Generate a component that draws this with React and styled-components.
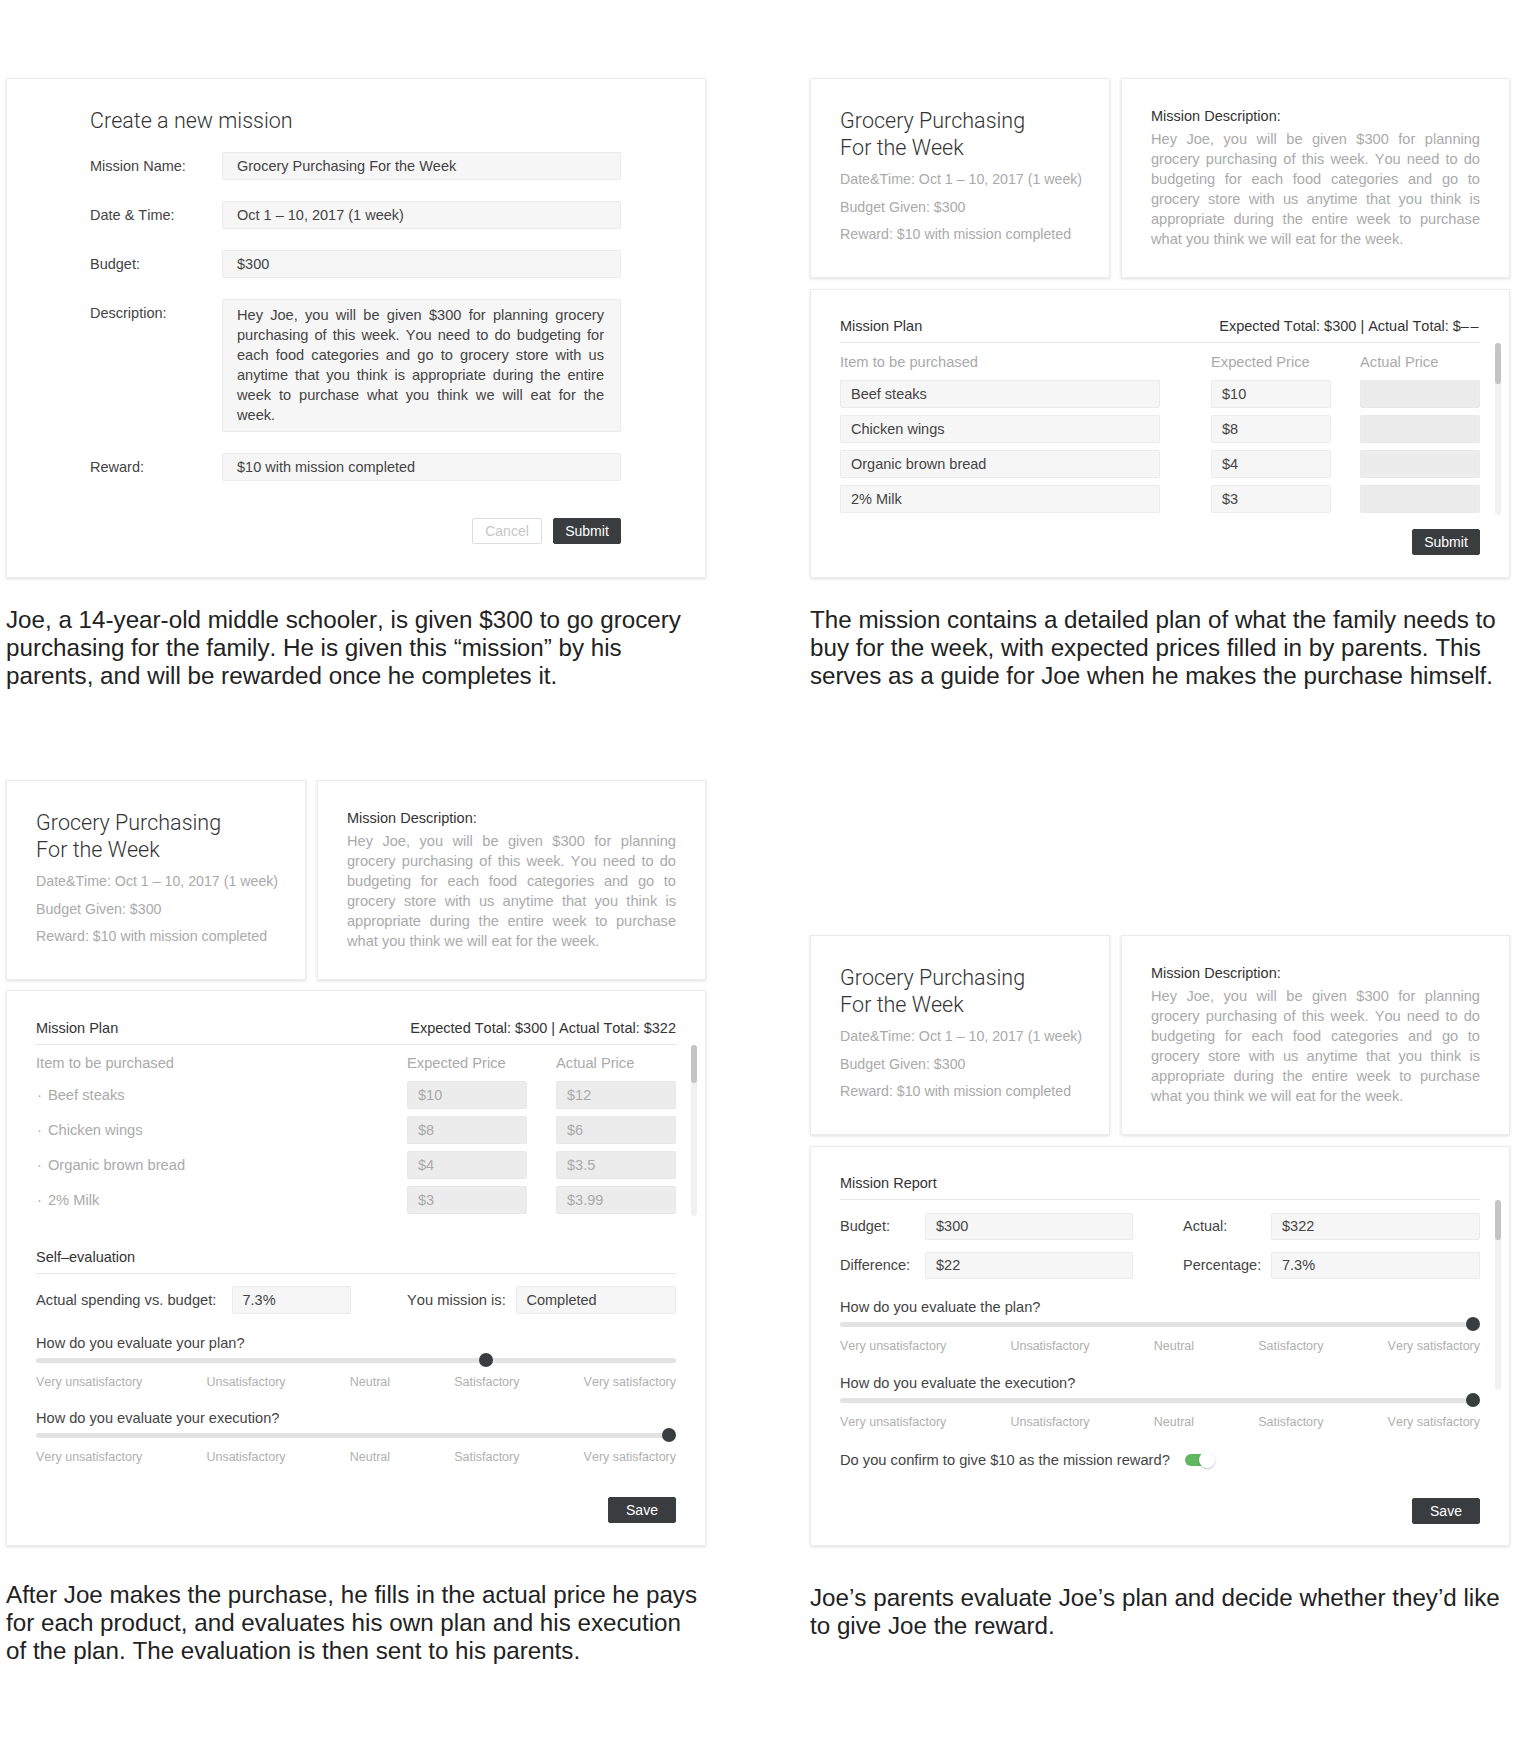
import React from 'react'
import styled, { createGlobalStyle } from 'styled-components'

const GlobalStyle = createGlobalStyle`
  *, *::before, *::after { box-sizing: border-box; }
  body {
    margin: 0;
    background: #fff;
    font-family: "Liberation Sans", Arial, sans-serif;
    color: #333;
    font-kerning: none;
  }
`

const Page = styled.div`
  display: grid;
  grid-template-columns: 700px 700px;
  column-gap: 104px;
  padding: 78px 0 76px 6px;
`

const Scene = styled.div`
  display: flex;
  flex-direction: column;
  gap: ${({ $gap }) => $gap ?? 11}px;
  align-self: end;
`

const CardRow = styled.div`
  display: flex;
  gap: ${({ $gap }) => $gap ?? 10}px;
`

const Card = styled.div`
  flex: ${({ $w, $grow }) => ($w ? `0 0 ${$w}px` : $grow ? '1' : 'none')};
  height: ${({ $h }) => $h}px;
  padding: ${({ $pad }) => $pad || '26px 29px 0'};
  background: #fff;
  border: 1px solid #ececec;
  box-shadow: 0 1px 3px rgba(0, 0, 0, 0.13);
`

const Caption = styled.p`
  width: 700px;
  margin: ${({ $top }) => $top}px 0 ${({ $bottom }) => $bottom || 0}px;
  font-size: 24.2px;
  line-height: 28px;
  color: #222;
`

const Title = styled.h1`
  margin: 0;
  font-family: Roboto, "Liberation Sans", sans-serif;
  font-weight: 300;
  font-size: 21.5px;
  line-height: ${({ $lh }) => $lh || 26}px;
  color: #333;
`

/* form */
const FormGrid = styled.div`
  display: grid;
  grid-template-columns: 132px 1fr;
  row-gap: 21px;
  margin-top: 18px;
`

const FormLabel = styled.div`
  font-size: 14.5px;
  line-height: 28px;
  color: #444;
`

const Field = styled.div`
  width: ${({ $w }) => ($w ? `${$w}px` : 'auto')};
  height: ${({ $h }) => $h || 28}px;
  padding: 0 10px;
  background: ${({ $muted }) => ($muted ? '#ececec' : '#f6f6f6')};
  border: 1px solid ${({ $muted }) => ($muted ? '#e8e8e8' : '#ebebeb')};
  border-radius: 2px;
  font-size: 14.5px;
  line-height: ${({ $h }) => ($h || 28) - 2}px;
  color: ${({ $faded }) => ($faded ? '#aaa' : '#444')};
  white-space: nowrap;
`

const FormField = styled(Field)`
  padding: 0 14px;
`

const TextField = styled(Field)`
  height: 133px;
  padding: 5px 16px 0 14px;
  font-size: 14.6px;
  line-height: 20px;
  text-align: justify;
  white-space: normal;
`

const ButtonRow = styled.div`
  display: flex;
  justify-content: flex-end;
  gap: 11px;
  margin-top: ${({ $top }) => $top}px;
`

const Button = styled.button`
  width: ${({ $w }) => $w || 68}px;
  height: 26px;
  padding: 0;
  font-family: inherit;
  font-size: 14px;
  border-radius: 2px;
  border: 1px solid ${({ $ghost }) => ($ghost ? '#dcdcdc' : '#3a3d40')};
  background: ${({ $ghost }) => ($ghost ? '#fff' : '#3a3d40')};
  color: ${({ $ghost }) => ($ghost ? '#c6c6c6' : '#fff')};
`

/* summary cards */
const Info = styled.div`
  margin-top: ${({ $first }) => ($first ? 8 : 7.5)}px;
  font-size: 14.2px;
  line-height: 20px;
  color: #aaa;
`

const DescHeading = styled.div`
  font-size: 14.5px;
  line-height: 20px;
  color: #333;
`

const DescText = styled.p`
  margin: 3.5px 0 0;
  font-size: 14.6px;
  line-height: 20px;
  color: #aaa;
  text-align: justify;
`

/* sections */
const SectionHead = styled.div`
  display: flex;
  justify-content: space-between;
  margin-top: ${({ $top }) => $top || 0}px;
  padding-bottom: 6px;
  border-bottom: 1px solid #e6e6e6;
  font-size: 14.5px;
  line-height: 20px;
  color: #333;
`

const Dashes = styled.span`
  letter-spacing: 1.5px;
`

const ScrollBody = styled.div`
  display: flex;
  align-items: flex-start;
`

const ScrollContent = styled.div`
  flex: 1;
  min-width: 0;
`

const Scrollbar = styled.div`
  flex: none;
  width: 6px;
  height: ${({ $h }) => $h}px;
  margin: 0 -21px 0 15px;
  border-radius: 3px;
  background: #f1f1f1;

  &::before {
    content: '';
    display: block;
    height: ${({ $thumb }) => $thumb}px;
    border-radius: 3px;
    background: #c4c4c4;
  }
`

const PlanGrid = styled.div`
  display: grid;
  grid-template-columns: 1fr 120px 120px;
  column-gap: 29px;
  row-gap: 7px;
  padding-top: ${({ $top }) => $top}px;
`

const ColHead = styled.div`
  margin-bottom: 1px;
  font-size: 14.7px;
  line-height: 20px;
  color: #aaa;
`

const ItemText = styled.div`
  font-size: 14.7px;
  line-height: 28px;
  color: #aaa;

  &::before {
    content: '·';
    margin-right: 6px;
    margin-left: 1px;
  }
`

const EvalRow = styled.div`
  display: grid;
  grid-template-columns: 1fr 269px;
  column-gap: 29px;
  margin-top: 12px;
`

const Pair = styled.div`
  display: grid;
  grid-template-columns: ${({ $label }) => $label}px 1fr;
  align-items: center;
`

const PairLabel = styled.div`
  font-size: 14.7px;
  color: #444;
`

const ReportGrid = styled.div`
  display: grid;
  grid-template-columns: 85px 208px 1fr 209px;
  row-gap: 12px;
  margin-top: 13px;
`

const ReportLabel = styled.div`
  padding-left: ${({ $indent }) => $indent || 0}px;
  font-size: 14.5px;
  line-height: 27px;
  color: #444;
`

/* sliders */
const Question = styled.div`
  margin-top: ${({ $top }) => $top}px;
  font-size: 14.6px;
  line-height: 20px;
  color: #444;
`

const Track = styled.div`
  position: relative;
  height: 14px;

  &::before {
    content: '';
    position: absolute;
    left: 0;
    right: 0;
    top: 4.5px;
    height: 5px;
    border-radius: 3px;
    background: #e3e3e3;
  }
`

const Thumb = styled.span`
  position: absolute;
  top: 0;
  left: ${({ $at }) => $at};
  width: 14px;
  height: 14px;
  border-radius: 50%;
  background: #3a3d40;
`

const Scale = styled.div`
  display: flex;
  justify-content: space-between;
  margin-top: 7px;
  font-size: 12.5px;
  line-height: 16px;
  color: #b0b0b0;
`

const ConfirmRow = styled.div`
  display: flex;
  align-items: center;
  gap: 15px;
  margin-top: 20px;
  font-size: 14.7px;
  line-height: 20px;
  color: #444;
`

const Toggle = styled.span`
  position: relative;
  display: inline-block;
  width: 30px;
  height: 16px;

  &::before {
    content: '';
    position: absolute;
    left: 0;
    top: 2px;
    width: 26px;
    height: 12px;
    border-radius: 6px;
    background: #5fb760;
  }

  &::after {
    content: '';
    position: absolute;
    right: 0;
    top: 0;
    width: 16px;
    height: 16px;
    border-radius: 50%;
    background: #fff;
    box-shadow: 0 1px 2px rgba(0, 0, 0, 0.25);
  }
`

const description =
  'Hey Joe, you will be given $300 for planning grocery purchasing of this week. You need to do budgeting for each food categories and go to grocery store with us anytime that you think is appropriate during the entire week to purchase what you think we will eat for the week.'

const items = [
  { name: 'Beef steaks', expected: '$10', actual: '$12' },
  { name: 'Chicken wings', expected: '$8', actual: '$6' },
  { name: 'Organic brown bread', expected: '$4', actual: '$3.5' },
  { name: '2% Milk', expected: '$3', actual: '$3.99' },
]

const scaleLabels = ['Very unsatisfactory', 'Unsatisfactory', 'Neutral', 'Satisfactory', 'Very satisfactory']

const CreateCard = () => (
  <Card $h={500} $pad="29px 84px 0 83px">
    <Title>Create a new mission</Title>
    <FormGrid>
      <FormLabel>Mission Name:</FormLabel>
      <FormField>Grocery Purchasing For the Week</FormField>
      <FormLabel>Date &amp; Time:</FormLabel>
      <FormField>Oct 1 – 10, 2017 (1 week)</FormField>
      <FormLabel>Budget:</FormLabel>
      <FormField>$300</FormField>
      <FormLabel>Description:</FormLabel>
      <TextField>{description}</TextField>
      <FormLabel>Reward:</FormLabel>
      <FormField>$10 with mission completed</FormField>
    </FormGrid>
    <ButtonRow $top={37}>
      <Button $ghost $w={70}>Cancel</Button>
      <Button>Submit</Button>
    </ButtonRow>
  </Card>
)

const MissionHeader = () => (
  <CardRow $gap={11}>
    <Card $w={300} $h={200} $pad="28px 20px 0 29px">
      <Title $lh={27}>
        Grocery Purchasing
        <br />
        For the Week
      </Title>
      <Info $first>Date&amp;Time: Oct 1 – 10, 2017 (1 week)</Info>
      <Info>Budget Given: $300</Info>
      <Info>Reward: $10 with mission completed</Info>
    </Card>
    <Card $grow $h={200} $pad="26.5px 29px 0">
      <DescHeading>Mission Description:</DescHeading>
      <DescText>{description}</DescText>
    </Card>
  </CardRow>
)

const Slider = ({ question, at, top }) => (
  <>
    <Question $top={top}>{question}</Question>
    <Track>
      <Thumb $at={at} />
    </Track>
    <Scale>
      {scaleLabels.map((label) => (
        <span key={label}>{label}</span>
      ))}
    </Scale>
  </>
)

const END = 'calc(100% - 14px)'

export default function App() {
  return (
    <>
      <GlobalStyle />
      <Page>
        <Scene>
          <CreateCard />
        </Scene>

        <Scene>
          <MissionHeader />
          <Card $h={289}>
            <SectionHead>
              <span>Mission Plan</span>
              <span>
                Expected Total: $300 | Actual Total: $<Dashes>––</Dashes>
              </span>
            </SectionHead>
            <ScrollBody>
              <ScrollContent>
                <PlanGrid $top={9}>
                  <ColHead>Item to be purchased</ColHead>
                  <ColHead>Expected Price</ColHead>
                  <ColHead>Actual Price</ColHead>
                  {items.map((item) => (
                    <React.Fragment key={item.name}>
                      <Field $w={320}>{item.name}</Field>
                      <Field>{item.expected}</Field>
                      <Field $muted />
                    </React.Fragment>
                  ))}
                </PlanGrid>
              </ScrollContent>
              <Scrollbar $h={172} $thumb={41} />
            </ScrollBody>
            <ButtonRow $top={14}>
              <Button>Submit</Button>
            </ButtonRow>
          </Card>
        </Scene>

        <Caption $top={28} $bottom={90}>
          Joe, a 14-year-old middle schooler, is given $300 to go grocery purchasing for the family. He is given
          this “mission” by his parents, and will be rewarded once he completes it.
        </Caption>
        <Caption $top={28} $bottom={90}>
          The mission contains a detailed plan of what the family needs to buy for the week, with expected prices
          filled in by parents. This serves as a guide for Joe when he makes the purchase himself.
        </Caption>

        <Scene $gap={10}>
          <MissionHeader />
          <Card $h={556} $pad="27px 29px 0">
            <SectionHead>
              <span>Mission Plan</span>
              <span>Expected Total: $300 | Actual Total: $322</span>
            </SectionHead>
            <ScrollBody>
              <ScrollContent>
                <PlanGrid $top={8}>
                  <ColHead>Item to be purchased</ColHead>
                  <ColHead>Expected Price</ColHead>
                  <ColHead>Actual Price</ColHead>
                  {items.map((item) => (
                    <React.Fragment key={item.name}>
                      <ItemText>{item.name}</ItemText>
                      <Field $muted $faded>{item.expected}</Field>
                      <Field $muted $faded>{item.actual}</Field>
                    </React.Fragment>
                  ))}
                </PlanGrid>
              </ScrollContent>
              <Scrollbar $h={171} $thumb={38} />
            </ScrollBody>
            <SectionHead $top={31}>
              <span>Self–evaluation</span>
            </SectionHead>
            <EvalRow>
              <Pair $label={195.5}>
                <PairLabel>Actual spending vs. budget:</PairLabel>
                <Field $w={119}>7.3%</Field>
              </Pair>
              <Pair $label={108.5}>
                <PairLabel>You mission is:</PairLabel>
                <Field>Completed</Field>
              </Pair>
            </EvalRow>
            <Slider question="How do you evaluate your plan?" at="69.2%" top={19} />
            <Slider question="How do you evaluate your execution?" at={END} top={18} />
            <ButtonRow $top={32}>
              <Button>Save</Button>
            </ButtonRow>
          </Card>
        </Scene>

        <Scene>
          <MissionHeader />
          <Card $h={400}>
            <SectionHead>
              <span>Mission Report</span>
            </SectionHead>
            <ScrollBody>
              <ScrollContent>
                <ReportGrid>
                  <ReportLabel>Budget:</ReportLabel>
                  <Field $h={27}>$300</Field>
                  <ReportLabel $indent={50}>Actual:</ReportLabel>
                  <Field $h={27}>$322</Field>
                  <ReportLabel>Difference:</ReportLabel>
                  <Field $h={27}>$22</Field>
                  <ReportLabel $indent={50}>Percentage:</ReportLabel>
                  <Field $h={27}>7.3%</Field>
                </ReportGrid>
                <Slider question="How do you evaluate the plan?" at={END} top={18} />
                <Slider question="How do you evaluate the execution?" at={END} top={19} />
                <ConfirmRow>
                  <span>Do you confirm to give $10 as the mission reward?</span>
                  <Toggle />
                </ConfirmRow>
              </ScrollContent>
              <Scrollbar $h={190} $thumb={40} />
            </ScrollBody>
            <ButtonRow $top={28}>
              <Button>Save</Button>
            </ButtonRow>
          </Card>
        </Scene>

        <Caption $top={35}>
          After Joe makes the purchase, he fills in the actual price he pays for each product, and evaluates his own
          plan and his execution of the plan. The evaluation is then sent to his parents.
        </Caption>
        <Caption $top={38}>
          Joe’s parents evaluate Joe’s plan and decide whether they’d like to give Joe the reward.
        </Caption>
      </Page>
    </>
  )
}
